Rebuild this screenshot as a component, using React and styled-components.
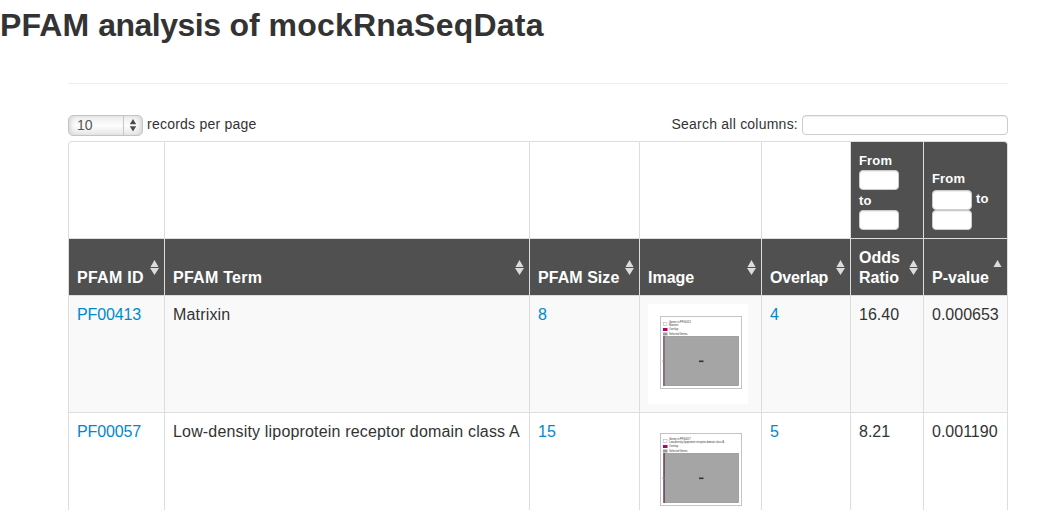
import React from "react";
import styled, { createGlobalStyle } from "styled-components";

const GlobalStyle = createGlobalStyle`
  *, *::before, *::after { box-sizing: border-box; }
  body {
    margin: 0;
    height: 510px;
    overflow: hidden;
    background: #fff;
    color: #333;
    font: 14px/20px "Helvetica Neue", "Liberation Sans", Arial, sans-serif;
  }
`;

const Title = styled.h1`
  margin: 5px 0 38px;
  font-size: 32px;
  line-height: 40px;
  font-weight: bold;
`;

const Word = styled.span`
  letter-spacing: ${(p) => p.$track || 0}px;
`;

const Container = styled.main`
  width: 940px;
  margin-left: 68px;
`;

const Divider = styled.hr`
  margin: 0 0 31px;
  border: 0;
  border-top: 1px solid #eee;
`;

const Toolbar = styled.div`
  display: flex;
  justify-content: space-between;
  height: 26px;
`;

const Control = styled.label`
  display: flex;
  align-items: flex-start;
  gap: 4px;
  white-space: nowrap;
`;

const Caption = styled.span`
  line-height: 18px;
  letter-spacing: 0.23px;
`;

const Picker = styled.span`
  display: flex;
  width: 75px;
  height: 21px;
  border: 1px solid #c4c4c4;
  border-radius: 5px;
  background: linear-gradient(#ececec, #fdfdfd 50%, #e6e6e6);
  box-shadow: inset 4px 0 4px -2px #d5d5d5, inset -4px 0 4px -2px #d5d5d5;
  color: #555;
`;

const PickerValue = styled.span`
  flex: 1;
  padding-left: 8px;
  line-height: 19px;
`;

const PickerArrows = styled.span`
  width: 19px;
  border-left: 1px solid #c8c8c8;
  display: flex;
  align-items: center;
  justify-content: center;
`;

const Field = styled.input`
  width: ${(p) => p.$width}px;
  height: 20px;
  padding: 0 6px;
  border: 1px solid #ccc;
  border-radius: 4px;
  background: #fff;
  box-shadow: inset 0 1px 1px rgba(0, 0, 0, 0.075);
  display: block;
`;

const Table = styled.table`
  width: 940px;
  table-layout: fixed;
  border-collapse: separate;
  border-spacing: 0;
  border: 1px solid #ddd;
  border-left: 0;
  border-radius: 4px;
  font-size: 16px;
  tr:first-child > td:first-child { border-top-left-radius: 4px; }
`;

const Cell = styled.td`
  padding: 8px;
  border-left: 1px solid #ddd;
  border-top: ${(p) => (p.$first ? 0 : 1)}px solid #ddd;
  background: ${(p) => p.$fill || "#fff"};
  vertical-align: top;
  white-space: nowrap;
  line-height: 22px;
  letter-spacing: ${(p) => p.$track || 0}px;
`;

const FilterRow = styled.tr`
  height: 96px;
`;

const FilterCell = styled(Cell)`
  background: #505050;
  color: #fff;
  vertical-align: bottom;
  font-size: 13px;
  font-weight: bold;
  letter-spacing: 0.15px;
  border-top-right-radius: ${(p) => (p.$corner ? 3 : 0)}px;
`;

const FilterLine = styled.div`
  display: flex;
  height: 20px;
  gap: 4px;
  line-height: ${(p) => (p.$raised ? 18 : 22)}px;
`;

const HeadRow = styled.tr`
  height: 57px;
`;

const HeadCell = styled.th`
  padding: 9px 8px 7px;
  border-left: 1px solid #ddd;
  border-top: 1px solid #ddd;
  background: #505050;
  color: #fff;
  text-align: left;
  vertical-align: bottom;
  font-weight: bold;
`;

const HeadContent = styled.div`
  display: flex;
  height: 40px;
  align-items: flex-end;
  justify-content: space-between;
  margin-right: -3px;
  white-space: ${(p) => (p.$wrap ? "normal" : "nowrap")};
  letter-spacing: ${(p) => p.$track || 0}px;
  svg { flex: none; align-self: flex-start; margin-top: 12px; }
`;

const Label = styled.span`
  width: ${(p) => (p.$wrap ? "44px" : "auto")};
`;

const DataRow = styled.tr`
  height: 117px;
`;

const Link = styled.a`
  color: #08c;
  text-decoration: none;
`;

const Picture = styled.svg`
  display: block;
  background: #fff;
  letter-spacing: 0;
`;

function SortIcon({ asc }) {
  return (
    <svg width="9" height="15" viewBox="0 0 9 15" fill="#dcdcdc">
      <path d="M4.5 0L8.5 7H.5z" />
      {!asc && <path d="M0 8h9L4.5 15z" />}
    </svg>
  );
}

function Thumbnail({ id, term, bar }) {
  return (
    <Picture width="100" height="100" viewBox="0 0 100 100">
      <rect x="12.5" y="12.5" width="81" height="72" fill="#fff" stroke="#c4c4c4" />
      <g fontSize="2.6" fill="#333" fontFamily="Liberation Sans, sans-serif">
        <text x="21" y="19">Genes in {id}</text>
        <text x="21" y="22.2">{term}</text>
        <text x="21" y="26.3">Overlap</text>
        <text x="21" y="31.3">Selected Genes</text>
      </g>
      <rect x="15.5" y="18.5" width="3.5" height="3" fill="#fff" stroke="#aaa" strokeWidth=".5" />
      <rect x="15" y="24" width="4.5" height="3" fill="#b0006d" />
      <rect x="15" y="28.5" width="4.5" height="3" fill="#999" />
      <rect x="15.5" y="32.5" width="75" height="49" fill="#a5a5a5" stroke="#8c8c8c" strokeWidth=".7" />
      <rect x="15.5" y="32" width={bar} height="50" fill="#6d3f5c" />
      <rect x="14.5" y="56.5" width="2" height="1.5" fill="#888" />
      <rect x="51" y="56.5" width="4.5" height="1.6" fill="#333" />
    </Picture>
  );
}

const columns = [
  { width: 96, name: "PFAM ID", track: 0.27 },
  { width: 365, name: "PFAM Term", track: 0.27 },
  { width: 110, name: "PFAM Size", track: 0.05 },
  { width: 122, name: "Image" },
  { width: 89, name: "Overlap", track: -0.2 },
  { width: 73, name: "Odds Ratio", wrap: true },
  { width: 84, name: "P-value", asc: true },
];

const rows = [
  { id: "PF00413", term: "Matrixin", size: 8, overlap: 4, odds: "16.40", p: "0.000653", fill: "#f9f9f9", bar: 1 },
  { id: "PF00057", term: "Low-density lipoprotein receptor domain class A", size: 15, overlap: 5, odds: "8.21", p: "0.001190", fill: "#fff", bar: 1.3 },
];

export default function App() {
  return (
    <>
      <GlobalStyle />
      <Title>
        <Word $track={0.1}>PFAM</Word> <Word $track={-0.5}>analysis</Word>{" "}
        <Word>of</Word> <Word $track={0.22}>mockRnaSeqData</Word>
      </Title>
      <Container>
        <Divider />
        <Toolbar>
          <Control>
            <Picker>
              <PickerValue>10</PickerValue>
              <PickerArrows>
                <svg width="8" height="13" viewBox="0 0 8 13" fill="#4d4d4d">
                  <path d="M4 0l3.2 5.3H.8zM.8 7.3h6.4L4 12.6z" />
                </svg>
              </PickerArrows>
            </Picker>
            <Caption>records per page</Caption>
          </Control>
          <Control>
            <Caption>Search all columns:</Caption>
            <Field $width={206} aria-label="Search all columns" />
          </Control>
        </Toolbar>
        <Table>
          <colgroup>
            {columns.map((c) => <col key={c.name} style={{ width: c.width }} />)}
          </colgroup>
          <tbody>
            <FilterRow>
              {columns.slice(0, 5).map((c) => <Cell key={c.name} $first />)}
              <FilterCell $first>
                <FilterLine>From</FilterLine>
                <FilterLine><Field $width={40} /></FilterLine>
                <FilterLine>to</FilterLine>
                <FilterLine><Field $width={40} /></FilterLine>
              </FilterCell>
              <FilterCell $first $corner>
                <FilterLine $raised>From</FilterLine>
                <FilterLine $raised><Field $width={40} />to</FilterLine>
                <FilterLine><Field $width={40} /></FilterLine>
              </FilterCell>
            </FilterRow>
            <HeadRow>
              {columns.map((c) => (
                <HeadCell key={c.name}>
                  <HeadContent $wrap={c.wrap} $track={c.track}>
                    <Label $wrap={c.wrap}>{c.name}</Label>
                    <SortIcon asc={c.asc} />
                  </HeadContent>
                </HeadCell>
              ))}
            </HeadRow>
            {rows.map((r) => (
              <DataRow key={r.id}>
                <Cell $fill={r.fill} $track={-0.12}><Link>{r.id}</Link></Cell>
                <Cell $fill={r.fill} $track={0.17}>{r.term}</Cell>
                <Cell $fill={r.fill}><Link>{r.size}</Link></Cell>
                <Cell $fill={r.fill}><Thumbnail id={r.id} term={r.term} bar={r.bar} /></Cell>
                <Cell $fill={r.fill}><Link>{r.overlap}</Link></Cell>
                <Cell $fill={r.fill}>{r.odds}</Cell>
                <Cell $fill={r.fill}>{r.p}</Cell>
              </DataRow>
            ))}
          </tbody>
        </Table>
      </Container>
    </>
  );
}
